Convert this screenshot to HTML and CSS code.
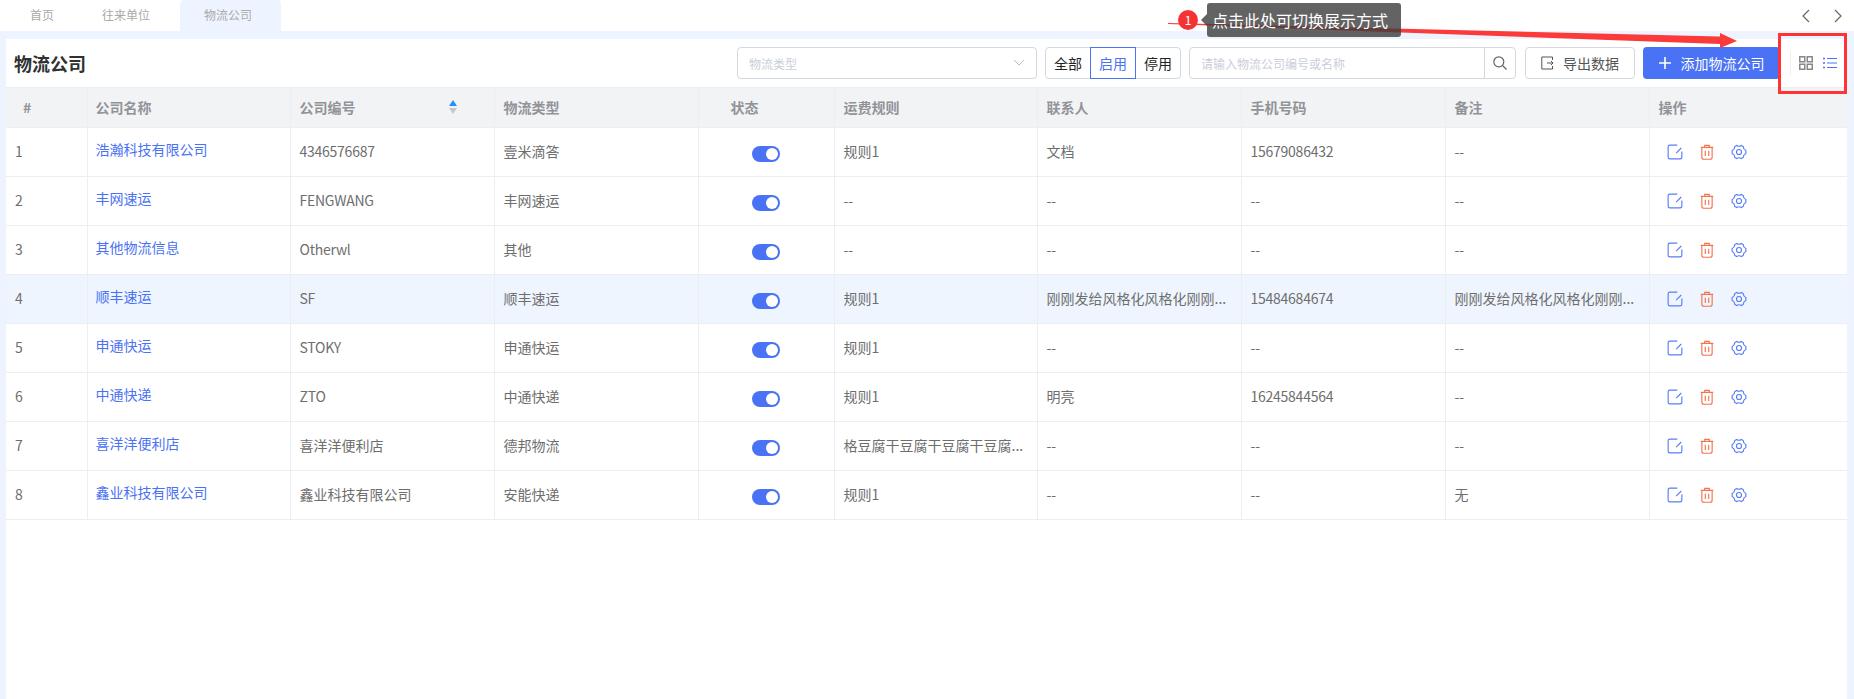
FILE: index.html
```html
<!DOCTYPE html>
<html lang="zh-CN">

<head>
    <meta charset="utf-8" />
    <title>物流公司</title>
    <link rel="stylesheet" href="styles.css">
</head>

<body>
    <svg class="defs" width="0" height="0">
        <symbol id="i-edit" viewBox="0 0 14 14">
            <path d="M13 6.500v5A1.500 1.500 0 0 1 11.500 13h-9A1.500 1.500 0 0 1 1 11.500v-9A1.500 1.500 0 0 1 2.500 1H9" />
            <path d="M12.500 3.500 8 8" />
        </symbol>
        <symbol id="i-trash" viewBox="0 0 14 14">
            <path d="M1.500 3h11M5 3V1.200h4V3" />
            <path d="M2.500 3v8.500A1.800 1.800 0 0 0 4.300 13.300h5.400a1.800 1.800 0 0 0 1.800-1.800V3" />
            <path d="M5.500 6v4.500M8.500 6v4.500" />
        </symbol>
        <symbol id="i-gear" viewBox="0 0 14 14">
            <path d="M5 1.300Q7 2.600 9 1.300L10.700 2.300Q10.800 4.700 13 5.700V8.300Q10.800 9.300 10.700 11.700L9 12.700Q7 11.400 5 12.700L3.300 11.700Q3.200 9.300 1 8.300V5.700Q3.200 4.700 3.300 2.300Z" />
            <circle cx="7" cy="7" r="2.200" />
        </symbol>
    </svg>

    <div class="tabbar">
        <a class="tab" href="javascript:;">首页</a>
        <a class="tab" href="javascript:;">往来单位</a>
        <a class="tab tab-on" href="javascript:;">物流公司</a>
        <div class="tab-arrows">
            <svg width="10" height="14" viewBox="0 0 10 14"><path d="M8 1 2 7l6 6" /></svg>
            <svg width="10" height="14" viewBox="0 0 10 14"><path d="M2 1l6 6-6 6" /></svg>
        </div>
    </div>

    <div class="panel">
        <div class="toolbar">
            <h1 class="title">物流公司</h1>
            <div class="select">
                <span>物流类型</span>
                <svg width="12" height="8" viewBox="0 0 12 8"><path d="M1 1l5 5 5-5" /></svg>
            </div>
            <div class="radios">
                <a href="javascript:;">全部</a><a class="on" href="javascript:;">启用</a><a href="javascript:;">停用</a>
            </div>
            <div class="search">
                <span class="search-text">请输入物流公司编号或名称</span>
                <span class="search-btn">
                    <svg width="16" height="16" viewBox="0 0 16 16"><circle cx="6.800" cy="6.800" r="5" /><path d="M10.500 10.500 14.500 14.500" /></svg>
                </span>
            </div>
            <a class="btn" href="javascript:;">
                <svg width="13" height="14" viewBox="0 0 13 14"><path d="M11.500 4V1H0.800v12h10.700v-3M6 7h6M10 5l2 2-2 2" /></svg>
                导出数据
            </a>
            <a class="btn btn-add" href="javascript:;">
                <svg width="12" height="12" viewBox="0 0 12 12"><path d="M6 0v12M0 6h12" /></svg>
                添加物流公司
            </a>
            <div class="views">
                <svg class="v-grid" width="14" height="14" viewBox="0 0 14 14">
                    <rect x="0.750" y="0.750" width="5" height="5" /><rect x="8.250" y="0.750" width="5" height="5" />
                    <rect x="0.750" y="8.250" width="5" height="5" /><rect x="8.250" y="8.250" width="5" height="5" />
                </svg>
                <svg class="v-list" width="14" height="12" viewBox="0 0 14 12">
                    <path d="M4 1.500h10M4 10.500h10" />
                    <path class="v-mid" d="M4 6h10" />
                    <circle cx="1" cy="1.500" r="1" /><circle cx="1" cy="6" r="1" /><circle cx="1" cy="10.500" r="1" />
                </svg>
            </div>
        </div>

        <table class="grid">
            <colgroup>
                <col class="c-no"><col class="c-name"><col class="c-code"><col class="c-type"><col class="c-state">
                <col class="c-rule"><col class="c-man"><col class="c-tel"><col class="c-memo"><col>
            </colgroup>
            <thead>
                <tr>
                    <th class="th-no">#</th>
                    <th>公司名称</th>
                    <th><div class="th-sort">公司编号<i class="sort"></i></div></th>
                    <th>物流类型</th>
                    <th class="th-state">状态</th>
                    <th>运费规则</th>
                    <th>联系人</th>
                    <th>手机号码</th>
                    <th>备注</th>
                    <th>操作</th>
                </tr>
            </thead>
            <tbody>
                <tr>
                    <td>1</td><td><a class="link" href="javascript:;">浩瀚科技有限公司</a></td><td class="num">4346576687</td><td>壹米滴答</td>
                    <td class="td-state"><span class="switch"></span></td>
                    <td>规则1</td><td>文档</td><td class="num">15679086432</td><td>--</td>
                    <td><div class="ops"><svg class="op-edit"><use href="#i-edit" /></svg><svg class="op-del"><use href="#i-trash" /></svg><svg class="op-set"><use href="#i-gear" /></svg></div></td>
                </tr>
                <tr>
                    <td>2</td><td><a class="link" href="javascript:;">丰网速运</a></td><td class="num">FENGWANG</td><td>丰网速运</td>
                    <td class="td-state"><span class="switch"></span></td>
                    <td>--</td><td>--</td><td>--</td><td>--</td>
                    <td><div class="ops"><svg class="op-edit"><use href="#i-edit" /></svg><svg class="op-del"><use href="#i-trash" /></svg><svg class="op-set"><use href="#i-gear" /></svg></div></td>
                </tr>
                <tr>
                    <td>3</td><td><a class="link" href="javascript:;">其他物流信息</a></td><td class="num">Otherwl</td><td>其他</td>
                    <td class="td-state"><span class="switch"></span></td>
                    <td>--</td><td>--</td><td>--</td><td>--</td>
                    <td><div class="ops"><svg class="op-edit"><use href="#i-edit" /></svg><svg class="op-del"><use href="#i-trash" /></svg><svg class="op-set"><use href="#i-gear" /></svg></div></td>
                </tr>
                <tr class="row-on">
                    <td>4</td><td><a class="link" href="javascript:;">顺丰速运</a></td><td class="num">SF</td><td>顺丰速运</td>
                    <td class="td-state"><span class="switch"></span></td>
                    <td>规则1</td><td>刚刚发给风格化风格化刚刚...</td><td class="num">15484684674</td><td>刚刚发给风格化风格化刚刚...</td>
                    <td><div class="ops"><svg class="op-edit"><use href="#i-edit" /></svg><svg class="op-del"><use href="#i-trash" /></svg><svg class="op-set"><use href="#i-gear" /></svg></div></td>
                </tr>
                <tr>
                    <td>5</td><td><a class="link" href="javascript:;">申通快运</a></td><td class="num">STOKY</td><td>申通快运</td>
                    <td class="td-state"><span class="switch"></span></td>
                    <td>规则1</td><td>--</td><td>--</td><td>--</td>
                    <td><div class="ops"><svg class="op-edit"><use href="#i-edit" /></svg><svg class="op-del"><use href="#i-trash" /></svg><svg class="op-set"><use href="#i-gear" /></svg></div></td>
                </tr>
                <tr>
                    <td>6</td><td><a class="link" href="javascript:;">中通快递</a></td><td class="num">ZTO</td><td>中通快递</td>
                    <td class="td-state"><span class="switch"></span></td>
                    <td>规则1</td><td>明亮</td><td class="num">16245844564</td><td>--</td>
                    <td><div class="ops"><svg class="op-edit"><use href="#i-edit" /></svg><svg class="op-del"><use href="#i-trash" /></svg><svg class="op-set"><use href="#i-gear" /></svg></div></td>
                </tr>
                <tr>
                    <td>7</td><td><a class="link" href="javascript:;">喜洋洋便利店</a></td><td>喜洋洋便利店</td><td>德邦物流</td>
                    <td class="td-state"><span class="switch"></span></td>
                    <td>格豆腐干豆腐干豆腐干豆腐...</td><td>--</td><td>--</td><td>--</td>
                    <td><div class="ops"><svg class="op-edit"><use href="#i-edit" /></svg><svg class="op-del"><use href="#i-trash" /></svg><svg class="op-set"><use href="#i-gear" /></svg></div></td>
                </tr>
                <tr>
                    <td>8</td><td><a class="link" href="javascript:;">鑫业科技有限公司</a></td><td>鑫业科技有限公司</td><td>安能快递</td>
                    <td class="td-state"><span class="switch"></span></td>
                    <td>规则1</td><td>--</td><td>--</td><td>无</td>
                    <td><div class="ops"><svg class="op-edit"><use href="#i-edit" /></svg><svg class="op-del"><use href="#i-trash" /></svg><svg class="op-set"><use href="#i-gear" /></svg></div></td>
                </tr>
            </tbody>
        </table>
    </div>

    <!-- 标注层 -->
    <svg class="mark-arrow" width="1854" height="699" viewBox="0 0 1854 699">
        <polygon points="1168,23 1720,36.500 1720,33 1737,41 1720,48 1720,44 1168,24" />
    </svg>
    <div class="mark-num">1</div>
    <div class="mark-tip">点击此处可切换展示方式</div>
    <div class="mark-box"></div>
</body>

</html>
```

FILE: styles.css
```css
* {
    margin: 0;
    padding: 0;
    box-sizing: border-box;
}

body {
    height: 699px;
    overflow: hidden;
    display: flex;
    flex-direction: column;
    position: relative;
    background: #eef4ff;
    font-family: "Noto Sans CJK SC", "Noto Sans", sans-serif;
    font-size: 14px;
    color: #666;
}

a {
    text-decoration: none;
    color: inherit;
}

.defs {
    position: absolute;
}

/* 顶部页签 */
.tabbar {
    height: 31px;
    flex: none;
    display: flex;
    background: #fff;
    padding-left: 6px;
    font-size: 12px;
    color: #aaa;
}

.tab {
    padding: 0 24px;
    line-height: 30px;
}

.tab-on {
    margin-left: 6px;
    padding-right: 29px;
    background: #eef4ff;
    border-radius: 4px 4px 0 0;
}

.tab-arrows {
    margin-left: auto;
    margin-right: 11px;
    display: flex;
    gap: 22px;
    align-items: center;
}

.tab-arrows path {
    fill: none;
    stroke: #666;
    stroke-width: 1.2;
}

/* 内容区 */
.panel {
    flex: 1;
    margin: 8px 7px 0 6px;
    background: #fff;
}

.toolbar {
    height: 48px;
    display: flex;
    align-items: center;
}

.title {
    width: 731px;
    padding-left: 8px;
    font-size: 18px;
    font-weight: bold;
    color: #303133;
}

.select {
    width: 300px;
    height: 32px;
    margin-right: 8px;
    padding: 0 11px;
    display: flex;
    align-items: center;
    justify-content: space-between;
    border: 1px solid #d3d7e0;
    border-radius: 4px;
    font-size: 12px;
    color: #c9ced8;
}

.select path {
    fill: none;
    stroke: #b8bcc4;
}

.radios {
    width: 136px;
    height: 32px;
    margin-right: 8px;
    display: flex;
    border: 1px solid #d3d7e0;
    border-radius: 4px;
    color: #222;
    line-height: 30px;
    text-align: center;
}

.radios a {
    flex: 1;
}

.radios .on {
    margin: -1px 0;
    height: 32px;
    border: 1px solid #4a72f5;
    color: #4a72f5;
}

.search {
    width: 327px;
    height: 32px;
    margin-right: 9px;
    padding-left: 11px;
    display: flex;
    align-items: center;
    justify-content: space-between;
    border: 1px solid #d3d7e0;
    border-radius: 4px;
    font-size: 12px;
    color: #c9ced8;
}

.search-btn {
    width: 31px;
    height: 30px;
    display: flex;
    align-items: center;
    justify-content: center;
    border-left: 1px solid #d3d7e0;
}

.search-btn circle,
.search-btn path {
    fill: none;
    stroke: #666;
    stroke-width: 1.2;
}

.btn {
    width: 110px;
    height: 32px;
    display: flex;
    align-items: center;
    justify-content: center;
    gap: 9px;
    border: 1px solid #d3d7e0;
    border-radius: 4px;
    color: #555;
}

.btn path {
    fill: none;
    stroke: #555;
}

.btn-add {
    width: 137px;
    margin-left: 8px;
    border: none;
    gap: 10px;
    background: #4a72f5;
    color: #fff;
}

.btn-add path {
    stroke: #fff;
    stroke-width: 1.6;
}

.views {
    margin-left: 10px;
    padding-left: 8px;
    height: 24px;
    display: flex;
    align-items: center;
    gap: 10px;
    border-left: 1px solid #eceef2;
}

.v-grid rect {
    fill: none;
    stroke: #888;
    stroke-width: 1.5;
}

.v-list path {
    stroke: #4a72f5;
    stroke-width: 1.2;
}

.v-list .v-mid {
    stroke: #9db3f8;
    stroke-width: 1.8;
}

.v-list circle {
    fill: #4a72f5;
}

/* 表格 */
.grid {
    width: 100%;
    table-layout: fixed;
    border-collapse: collapse;
}

.c-no {
    width: 81px;
}

.c-code,
.c-type,
.c-man,
.c-tel,
.c-memo {
    width: 204px;
}

.c-name,
.c-rule {
    width: 203px;
}

.c-state {
    width: 136px;
}

.grid th,
.grid td {
    padding: 0 9px 2px;
    text-align: left;
    border: 1px solid #edeef3;
    border-top: none;
    white-space: nowrap;
    overflow: hidden;
}

.grid th:nth-child(2),
.grid td:nth-child(2) {
    padding-left: 8px;
}

.grid th:first-child,
.grid td:first-child {
    border-left: none;
}

.grid th:last-child,
.grid td:last-child {
    border-right: none;
}

.grid th {
    height: 40px;
    background: #f2f3f5;
    font-weight: bold;
    color: #919399;
    border-top: 1px solid #eceef2;
}

.grid .th-no {
    padding-left: 17px;
}

.grid .th-state {
    padding-left: 32px;
}

.th-sort {
    display: flex;
    align-items: center;
    justify-content: space-between;
    padding-right: 28px;
}

.sort {
    width: 8px;
    height: 14px;
    display: flex;
    flex-direction: column;
    justify-content: space-between;
}

.sort::before,
.sort::after {
    content: "";
    border: 4px solid transparent;
    border-top: none;
    border-bottom: 6px solid #1e90ff;
}

.sort::after {
    border-bottom: none;
    border-top: 6px solid #c4c6cc;
}

.grid td {
    height: 49px;
    color: #6e6e6e;
}

.grid .num {
    letter-spacing: -0.25px;
}

.row-on td {
    background: #eef5fe;
}

.link {
    display: inline-block;
    margin-bottom: 5px;
    color: #4a72f5;
}

.grid .td-state {
    text-align: center;
}

.switch {
    width: 28px;
    height: 16px;
    margin-top: 4px;
    padding: 2px;
    display: inline-flex;
    justify-content: flex-end;
    vertical-align: middle;
    background: #4a72f5;
    border-radius: 8px;
}

.switch::after {
    content: "";
    width: 12px;
    height: 12px;
    border-radius: 50%;
    background: #fff;
}

.ops {
    padding-left: 8px;
    margin-top: 1px;
    display: flex;
    align-items: center;
    gap: 16px;
}

.ops svg {
    width: 16px;
    height: 16px;
    fill: none;
    stroke-width: 1;
}

.op-edit,
.op-set {
    stroke: #5a7cf5;
}

.op-del {
    stroke: #f5734d;
}

/* 标注 */
.mark-arrow {
    position: absolute;
    left: 0;
    top: 0;
}

.mark-arrow polygon {
    fill: #fb3a3a;
}

.mark-num {
    position: absolute;
    left: 1178px;
    top: 10px;
    width: 20px;
    height: 20px;
    border-radius: 50%;
    background: #f43333;
    color: #fff;
    font-size: 12px;
    line-height: 20px;
    text-align: center;
}

.mark-tip {
    position: absolute;
    left: 1207px;
    top: 3px;
    width: 194px;
    height: 34px;
    padding-left: 5px;
    background: rgba(60, 60, 60, 0.8);
    border-radius: 3px;
    color: #fff;
    font-size: 16px;
    line-height: 34px;
    white-space: nowrap;
}

.mark-tip::before {
    content: "";
    position: absolute;
    left: -6px;
    top: 11px;
    border: 6px solid transparent;
    border-left: none;
    border-right-color: rgba(60, 60, 60, 0.8);
}

.mark-box {
    position: absolute;
    left: 1778px;
    top: 33px;
    width: 69px;
    height: 61px;
    border: 3px solid #f33;
}
```
